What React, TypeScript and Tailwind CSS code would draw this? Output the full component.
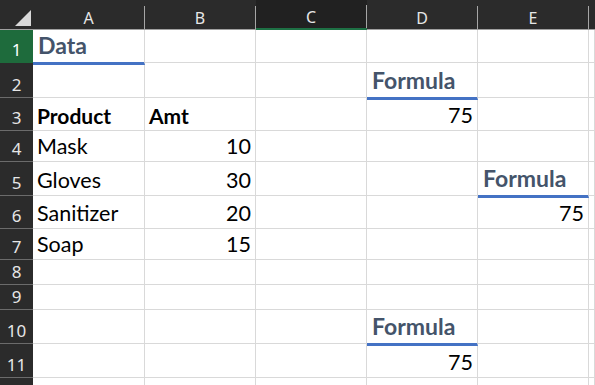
import React from "react";

type Cell = { t?: string; kind?: "txt" | "num" | "bold" | "head"; line?: boolean };

const rows: { h: string; n: string; cells: Cell[] }[] = [
  { h: "h-[33px]", n: "1", cells: [{ t: "Data", kind: "head", line: true }, {}, {}, {}, {}, {}] },
  { h: "h-[35px]", n: "2", cells: [{}, {}, {}, { t: "Formula", kind: "head", line: true }, {}, {}] },
  { h: "h-[33px]", n: "3", cells: [{ t: "Product", kind: "bold" }, { t: "Amt", kind: "bold" }, {}, { t: "75", kind: "num" }, {}, {}] },
  { h: "h-[31px]", n: "4", cells: [{ t: "Mask" }, { t: "10", kind: "num" }, {}, {}, {}, {}] },
  { h: "h-[34px]", n: "5", cells: [{ t: "Gloves" }, { t: "30", kind: "num" }, {}, {}, { t: "Formula", kind: "head", line: true }, {}] },
  { h: "h-[33px]", n: "6", cells: [{ t: "Sanitizer" }, { t: "20", kind: "num" }, {}, {}, { t: "75", kind: "num" }, {}] },
  { h: "h-[31px]", n: "7", cells: [{ t: "Soap" }, { t: "15", kind: "num" }, {}, {}, {}, {}] },
  { h: "h-[25px]", n: "8", cells: [{}, {}, {}, {}, {}, {}] },
  { h: "h-[25px]", n: "9", cells: [{}, {}, {}, {}, {}, {}] },
  { h: "h-[34px]", n: "10", cells: [{}, {}, {}, { t: "Formula", kind: "head", line: true }, {}, {}] },
  { h: "h-[34px]", n: "11", cells: [{}, {}, {}, { t: "75", kind: "num" }, {}, {}] },
  { h: "h-[34px]", n: "", cells: [{}, {}, {}, {}, {}, {}] },
];

const cols = ["A", "B", "C", "D", "E", ""];

function BodyCell({ c }: { c: Cell }) {
  const base = "flex items-end overflow-visible whitespace-nowrap border-r border-[#d9d9d9] leading-none";
  const border = c.line
    ? " border-b-[3px] border-b-[#4472c4] pb-[5px] mb-[-2px] relative z-10"
    : " border-b border-b-[#d9d9d9] pb-[4px]";
  let txt = "text-[21.5px] text-black pl-[4px]";
  if (c.kind === "num") txt = "text-[21.5px] text-black justify-end pr-[4px]";
  if (c.kind === "bold") txt = "text-[21px] font-bold text-black pl-[4px]";
  if (c.kind === "head") txt = "text-[23px] font-bold text-[#44546a] pl-[5px]";
  return <div className={base + border + " " + txt}>{c.t ?? ""}</div>;
}

export default function App() {
  return (
    <div
      className="w-[595px] h-[385px] overflow-hidden bg-white"
      style={{ fontFamily: "Lato, 'Noto Sans', sans-serif" }}
    >
      {/* Column header */}
      <div className="grid grid-cols-[33px_112px_111px_111px_111px_111px_1fr] h-[30px] bg-[#2b2b2b]">
        <div className="relative border-b border-b-[#a0a0a0]">
          <svg className="absolute left-0 top-0" width="33" height="30" viewBox="0 0 33 30">
            <polygon points="15,26 31,10 31,26" fill="#d9d9d9" />
          </svg>
        </div>
        {cols.map((c, i) => (
          <div
            key={i}
            className={
              "flex flex-col justify-end " +
              (c === "C" ? "bg-[#212121] border-b-2 border-b-[#1e7145]" : "border-b border-b-[#a0a0a0]")
            }
          >
            <div
              className={
                "h-[23px] flex items-end justify-center pb-[3px] text-[16px] leading-none text-[#e6e6e6] " +
                (c ? "border-r border-r-[#a6a6a6]" : "")
              }
              style={{ fontFamily: "'Noto Sans', sans-serif" }}
            >
              {c}
            </div>
          </div>
        ))}
      </div>
      {/* Body */}
      {rows.map((r, idx) => (
        <div key={idx} className={"grid grid-cols-[33px_112px_111px_111px_111px_111px_1fr] " + r.h}>
          <div
            className={
              "flex items-end justify-center pb-[4px] text-[17px] leading-none border-b " +
              (r.n === "1"
                ? "bg-[#1e6b3c] border-b-[#1e6b3c] text-white"
                : "bg-[#2b2b2b] border-b-[#6b6b6b] text-[#e6e6e6]")
            }
            style={{ fontFamily: "'Noto Sans', sans-serif" }}
          >
            {r.n}
          </div>
          {r.cells.map((c, i) => (
            <BodyCell key={i} c={c} />
          ))}
        </div>
      ))}
    </div>
  );
}
